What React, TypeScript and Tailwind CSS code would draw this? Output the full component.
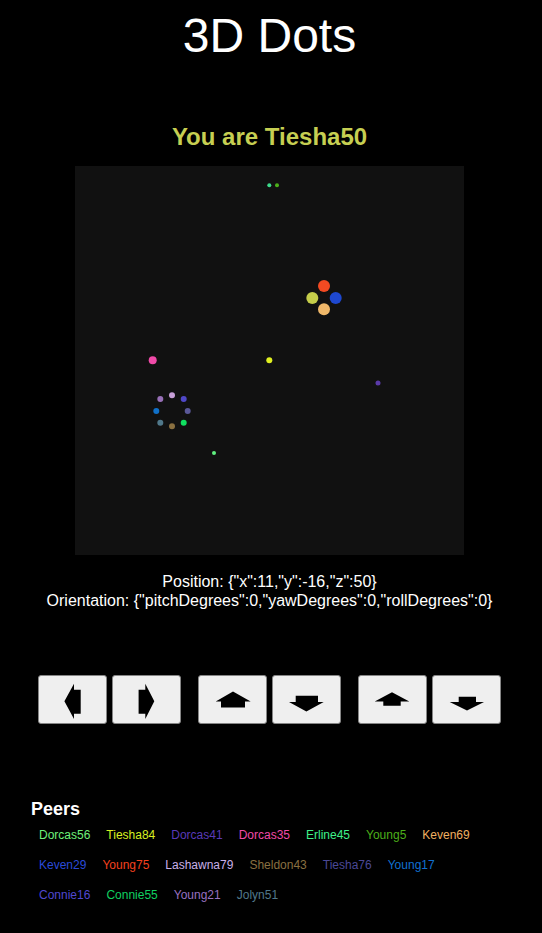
type Dot = { x: number; y: number; d: number; c: string };

// dots drawn on the 389x389 view, coords relative to its top-left
const dots: Dot[] = [
  { x: 194.3, y: 19.3, d: 4, c: "#3ddc8c" },
  { x: 202, y: 19.3, d: 4, c: "#4cb01a" },
  { x: 249, y: 120, d: 12, c: "#f34a22" },
  { x: 237.3, y: 132, d: 12, c: "#c5cd4a" },
  { x: 260.7, y: 132, d: 12, c: "#1e48d0" },
  { x: 249, y: 143.3, d: 12, c: "#f0b86a" },
  { x: 77.7, y: 194.3, d: 8, c: "#f04aa8" },
  { x: 194.3, y: 194.3, d: 6, c: "#e0f020" },
  { x: 303, y: 217, d: 5, c: "#5a3aa8" },
  { x: 139, y: 287, d: 4, c: "#60f080" },
  { x: 97, y: 229.3, d: 6, c: "#c8a0d8" },
  { x: 108.7, y: 233, d: 6, c: "#5048c8" },
  { x: 112.7, y: 245, d: 6, c: "#5a5898" },
  { x: 108.7, y: 256.7, d: 6, c: "#10e060" },
  { x: 97, y: 260.3, d: 6, c: "#8a7040" },
  { x: 85.3, y: 256.7, d: 6, c: "#50788a" },
  { x: 81.3, y: 245, d: 6, c: "#1070c8" },
  { x: 85.3, y: 233, d: 6, c: "#9870b8" },
];

const peers = [
  { name: "Dorcas56", c: "#6ef07a" },
  { name: "Tiesha84", c: "#d8f020" },
  { name: "Dorcas41", c: "#5a3ab8" },
  { name: "Dorcas35", c: "#f04aa8" },
  { name: "Erline45", c: "#3ef08a" },
  { name: "Young5", c: "#4caf1a" },
  { name: "Keven69", c: "#f0b060" },
  { name: "Keven29", c: "#2a4ad8" },
  { name: "Young75", c: "#f4411e" },
  { name: "Lashawna79", c: "#c8b0e8" },
  { name: "Sheldon43", c: "#8a7040" },
  { name: "Tiesha76", c: "#4a4898" },
  { name: "Young17", c: "#1070d0" },
  { name: "Connie16", c: "#5048d0" },
  { name: "Connie55", c: "#10d060" },
  { name: "Young21", c: "#9870c0" },
  { name: "Jolyn51", c: "#50788a" },
];

const arrows = {
  left: "36,8.7 26.4,26.3 36,44 36,38.7 42.7,38.7 42.7,14.7 36,14.7",
  right: "33.3,8.7 42.3,26.3 33.3,44 33.3,38.7 26.6,38.7 26.6,14.7 33.3,14.7",
  up: "35,16.4 52.7,26.4 47,26.4 47,32.4 23,32.4 23,26.4 17.7,26.4",
  down: "23.7,20.7 46,20.7 46,27 51.7,27 34.4,36.4 17,27 23.7,27",
  upSmall: "34,17.3 51.3,26.4 42.7,26.4 42.7,30.7 25.3,30.7 25.3,26.4 16.7,26.4",
  downSmall: "26.7,21.7 44,21.7 44,27 52,27 35,35.4 17.7,27 26.7,27",
};

function ArrowButton({ points, label }: { points: string; label: string }) {
  return (
    <button
      aria-label={label}
      className="w-[69px] h-[49px] bg-[#efefef] border border-[#858585] rounded-[3px] p-0 block"
    >
      <svg width="69" height="49" viewBox="0 0 69 49" className="block -m-px">
        <polygon points={points} fill="#000" />
      </svg>
    </button>
  );
}

export default function App() {
  return (
    <div className="min-h-screen bg-black text-white font-['Liberation_Sans',Arial,sans-serif]">
      <div className="w-[539px] flex flex-col items-center">
        <h1 className="pt-[8px] text-[48px] leading-[55px] font-normal">3D Dots</h1>
        <h2 className="mt-[60px] text-[24px] leading-[28px] font-bold text-[#c6cf52]">
          You are Tiesha50
        </h2>

        <div className="mt-[15px] w-[389px] h-[389px] bg-[#111111]">
          <svg width="389" height="389" viewBox="0 0 389 389" className="block">
            {dots.map((d, i) => (
              <circle key={i} cx={d.x} cy={d.y} r={d.d / 2} fill={d.c} />
            ))}
          </svg>
        </div>

        <div className="mt-[17px] text-[16px] leading-[19px] text-center">
          <div>Position: {'{"x":11,"y":-16,"z":50}'}</div>
          <div>Orientation: {'{"pitchDegrees":0,"yawDegrees":0,"rollDegrees":0}'}</div>
        </div>

        <div className="mt-[65px] flex gap-[17px]">
          <div className="flex gap-[5px]">
            <ArrowButton points={arrows.left} label="Turn left" />
            <ArrowButton points={arrows.right} label="Turn right" />
          </div>
          <div className="flex gap-[5px]">
            <ArrowButton points={arrows.up} label="Forward" />
            <ArrowButton points={arrows.down} label="Back" />
          </div>
          <div className="flex gap-[5px]">
            <ArrowButton points={arrows.upSmall} label="Up" />
            <ArrowButton points={arrows.downSmall} label="Down" />
          </div>
        </div>

        <div className="self-stretch pl-[31px] pr-[49px]">
          <h3 className="mt-[75px] text-[18px] leading-[21px] font-bold">Peers</h3>
          <div className="flex flex-wrap text-[12px] leading-[30px]">
            {peers.map((p) => (
              <span key={p.name} className="px-2" style={{ color: p.c }}>
                {p.name}
              </span>
            ))}
          </div>
        </div>
      </div>
    </div>
  );
}
